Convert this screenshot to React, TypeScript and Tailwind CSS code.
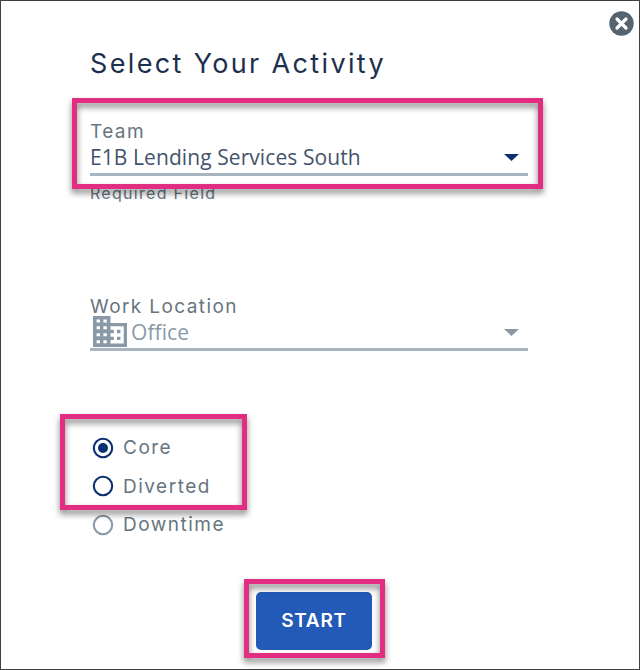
interface SelectFieldProps {
    label: string;
    value: string;
    hint?: string;
    disabled?: boolean;
    highlighted?: boolean;
}

interface Activity {
    name: string;
    checked?: boolean;
    disabled?: boolean;
}

const activities: Activity[] = [
    { name: "Core", checked: true },
    { name: "Diverted" },
    { name: "Downtime", disabled: true },
];

const labelFont = "font-['Inter',sans-serif]";
const valueFont = "font-['Open_Sans',sans-serif]";

// Pink callout frame, always placed over the content it points at
function Highlight({ className }: { className: string }) {
    return (
        <div
            className={`pointer-events-none absolute z-10 border-5 border-[#e22e82] drop-shadow-[0_4px_3px_rgba(0,0,0,0.5)] ${className}`}
        />
    );
}

function OfficeIcon() {
    return (
        <svg className="h-[31px] w-[34px] shrink-0" viewBox="0 0 34 31">
            <path
                fill="#8a99a7"
                fillRule="evenodd"
                d="M0 0H17.5V7H34V31H0ZM3.6 3.5V6.5H7V3.5ZM10.4 3.5V6.5H13.8V3.5ZM3.6 10.3V13.3H7V10.3ZM10.4 10.3V13.3H13.8V10.3ZM3.6 17.2V20.2H7V17.2ZM10.4 17.2V20.2H13.8V17.2ZM3.6 24.2V27.2H7V24.2ZM10.4 24.2V27.2H13.8V24.2ZM17.5 10.3V13.8H20.8V17.2H17.5V20.7H20.8V24.1H17.5V27.6H30.7V10.3ZM24 13.8H27.4V17.2H24ZM24 20.7H27.4V24.1H24Z"
            />
        </svg>
    );
}

function SelectField({ label, value, hint, disabled, highlighted }: SelectFieldProps) {
    return (
        <div className="relative h-[175px] w-[438px]">
            <div className={`${labelFont} h-[26px] pt-[2px] text-[19px] leading-[26px] tracking-[1.4px] text-[#67757f]`}>
                {label}
            </div>
            <div className="flex h-[33px] items-start justify-between border-b-3 border-[#a9b5be]">
                <div className={`${valueFont} flex text-[21px] leading-[28px] tracking-[0.08px] ${disabled ? "text-[#8a99a7]" : "text-[#44546c]"}`}>
                    {disabled && (
                        <span className="-mt-[2px] mr-1 ml-[3px]">
                            <OfficeIcon />
                        </span>
                    )}
                    <span>{value}</span>
                </div>
                <svg className="mt-[11px] mr-[9px] h-[7px] w-[15px]" viewBox="0 0 15 7">
                    <path d="M0 0H15L7.5 7Z" fill={disabled ? "#8a99a7" : "#0b3070"} />
                </svg>
            </div>
            {hint && (
                <div className={`${labelFont} mt-[6px] text-[16px] leading-[22px] tracking-[1.3px] text-[#67757f]`}>
                    {hint}
                </div>
            )}
            {highlighted && <Highlight className="-top-[19px] -left-[18px] h-[91px] w-[471px]" />}
        </div>
    );
}

function ActivityOption({ name, checked, disabled }: Activity) {
    const color = disabled ? "#8a99a7" : "#0b3070";

    return (
        <label className="flex h-[38.5px] items-center">
            <svg className="mt-px h-[22px] w-[22px]" viewBox="0 0 22 22" fill="none">
                <circle cx="11" cy="11" r="9.2" stroke={color} strokeWidth="2.1" />
                {checked && <circle cx="11" cy="11" r="5" fill={color} />}
            </svg>
            <span className={`${labelFont} mt-[2px] ml-[9px] text-[19px] leading-[26px] tracking-[1.5px] text-[#67757f]`}>
                {name}
            </span>
        </label>
    );
}

export default function App() {
    return (
        <main className="relative h-[670px] w-[640px] overflow-hidden border border-[#404040] bg-white pl-[89px]">
            <button className="absolute top-[10px] right-[5px]" aria-label="Close">
                <svg className="h-[25px] w-[25px]" viewBox="0 0 25 25">
                    <circle cx="12.5" cy="12.5" r="12.2" fill="#54656f" />
                    <path d="M8 8L17 17M17 8L8 17" stroke="white" strokeWidth="3.2" strokeLinecap="round" />
                </svg>
            </button>

            <h1 className={`${labelFont} pt-[43px] pb-px text-[27px] leading-[40px] tracking-[2.35px] text-[#1c2f4c]`}>
                Select Your Activity
            </h1>

            <div className="mt-[32px]">
                <SelectField label="Team" value="E1B Lending Services South" hint="Required Field" highlighted />
                <SelectField label="Work Location" value="Office" disabled />
            </div>

            <div className="relative -mt-[39px] flex w-[187px] flex-col pl-[2px]">
                {activities.map((activity) => (
                    <ActivityOption key={activity.name} {...activity} />
                ))}
                <Highlight className="-top-[14px] -left-[30px] h-[96px] w-[187px]" />
            </div>

            <div className="relative mt-[48px] ml-[166px] h-[58px] w-[116px]">
                <button className={`${labelFont} h-full w-full rounded-[5px] bg-[#235ab8] pt-[2px] text-[19px] font-semibold tracking-[0.7px] text-white`}>
                    START
                </button>
                <Highlight className="-top-[13px] -left-[12px] h-[79px] w-[141px]" />
            </div>
        </main>
    );
}
